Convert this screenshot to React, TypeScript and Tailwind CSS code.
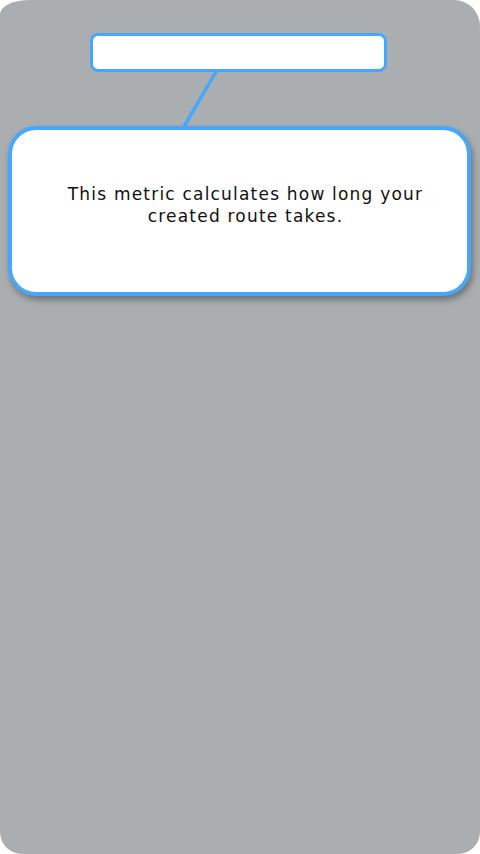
import React from "react";

export default function App() {
  return (
    <div className="w-[480px] h-[854px] bg-white">
      <div className="relative w-[480px] h-[854px] bg-[#abaeb0] rounded-tl-[30px_14px] rounded-tr-[26px] rounded-bl-[22px] rounded-br-[22px] overflow-hidden">
        <svg className="absolute left-0 top-0" width="480" height="140">
          <line x1="217" y1="70" x2="182" y2="130" stroke="#47a8fb" strokeWidth="3.5" />
        </svg>
        <div className="absolute left-[90px] top-[33px] w-[297px] h-[39px] bg-white border-[3.5px] border-[#47a8fb] rounded-[8px]" />
        <div className="absolute left-[8px] top-[126px] w-[463px] h-[170px] bg-white border-[4px] border-[#47a8fb] rounded-[28px] shadow-[2px_4px_6px_rgba(0,0,0,0.35)] flex items-center justify-center pb-[13px] pl-[12px]">
          <p className="text-center text-[17px] leading-[22px] tracking-[1.2px] text-[#111] font-['DejaVu_Sans',sans-serif]">
            This metric calculates how long your
            <br />
            created route takes.
          </p>
        </div>
      </div>
    </div>
  );
}
